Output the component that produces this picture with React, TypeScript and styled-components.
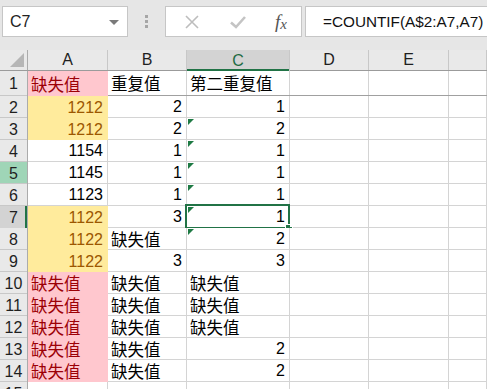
import styled, { createGlobalStyle } from "styled-components";

const GlobalStyle = createGlobalStyle`
  html, body {
    margin: 0;
    padding: 0;
    background: #ffffff;
    overflow: hidden;
  }
  body {
    font-family: "Liberation Sans", "Noto Sans CJK SC", Arial, sans-serif;
  }
`;

const COLS = "28px 80px 79px 103px 79px 80px 1fr";

type Kind = "bad" | "neutral" | "plain";
type Cell = { t: string; num?: boolean; kind?: Kind; tri?: boolean; sel?: boolean };

const n = (t: string, extra: Partial<Cell> = {}): Cell => ({ t, num: true, ...extra });
const s = (t: string, extra: Partial<Cell> = {}): Cell => ({ t, ...extra });
const MISS = "缺失值";

const rows: Cell[][] = [
  [s(MISS, { kind: "bad" }), s("重复值"), s("第二重复值")],
  [n("1212", { kind: "neutral" }), n("2"), n("1")],
  [n("1212", { kind: "neutral" }), n("2"), n("2", { tri: true })],
  [n("1154"), n("1"), n("1", { tri: true })],
  [n("1145"), n("1"), n("1", { tri: true })],
  [n("1123"), n("1"), n("1", { tri: true })],
  [n("1122", { kind: "neutral" }), n("3"), n("1", { tri: true, sel: true })],
  [n("1122", { kind: "neutral" }), s(MISS), n("2", { tri: true })],
  [n("1122", { kind: "neutral" }), n("3"), n("3")],
  [s(MISS, { kind: "bad" }), s(MISS), s(MISS)],
  [s(MISS, { kind: "bad" }), s(MISS), s(MISS)],
  [s(MISS, { kind: "bad" }), s(MISS), s(MISS)],
  [s(MISS, { kind: "bad" }), s(MISS), n("2")],
  [s(MISS, { kind: "bad" }), s(MISS), n("2")],
  [],
];

function App() {
  return (
    <>
      <GlobalStyle />
      <Window>
        <FormulaBar>
          <NameBox>
            <span>C7</span>
            <Caret />
          </NameBox>
          <Grip>
            <i />
            <i />
            <i />
          </Grip>
          <ButtonBox>
            <svg width="18" height="18" viewBox="0 0 18 18">
              <path d="M3 3 L15 15 M15 3 L3 15" stroke="#bdbdbd" strokeWidth="1.6" fill="none" />
            </svg>
            <svg width="18" height="18" viewBox="0 0 18 18">
              <path d="M2 9.5 L7 14 L16 4" stroke="#c4c4c4" strokeWidth="2.6" fill="none" />
            </svg>
            <Fx>
              f<sub>x</sub>
            </Fx>
          </ButtonBox>
          <FormulaInput>=COUNTIF(A$2:A7,A7)</FormulaInput>
        </FormulaBar>

        <Sheet>
          <HeaderRow>
            <Corner>
              <svg width="14" height="14" viewBox="0 0 14 14">
                <polygon points="14,0 14,14 0,14" fill="#b6b6b6" />
              </svg>
            </Corner>
            {["A", "B", "C", "D", "E", ""].map((c, i) => (
              <ColHead key={i} $active={c === "C"}>
                {c}
              </ColHead>
            ))}
          </HeaderRow>

          {rows.map((r, i) => {
            const rowNo = i + 1;
            return (
              <Row key={i} $h={i === 0 ? 25 : 22} $frozen={i === 0}>
                <RowHead $state={rowNo === 7 ? "sel" : rowNo === 5 ? "hi" : "none"}>{rowNo}</RowHead>
                {[0, 1, 2, 3, 4, 5].map((ci) => {
                  const c = r[ci];
                  return (
                    <DataCell key={ci} $num={!!c?.num} $kind={c?.kind ?? "plain"}>
                      {c?.tri && <Triangle />}
                      {c?.t}
                      {c?.sel && (
                        <Selection>
                          <FillHandle />
                        </Selection>
                      )}
                    </DataCell>
                  );
                })}
              </Row>
            );
          })}
        </Sheet>
      </Window>
    </>
  );
}

export default App;

const Window = styled.div`
  width: 487px;
  height: 389px;
  overflow: hidden;
  background: #ffffff;
`;

const FormulaBar = styled.div`
  height: 50px;
  background: #e6e6e6;
  display: flex;
  align-items: flex-start;
  padding: 6px 0 0 2px;
  box-sizing: border-box;
`;

const Box = styled.div`
  height: 31px;
  box-sizing: border-box;
  background: #ffffff;
  border: 1px solid #c6c6c6;
  display: flex;
  align-items: center;
`;

const NameBox = styled(Box)`
  width: 126px;
  padding: 0 8px 0 7px;
  justify-content: space-between;
  font-size: 16px;
  color: #222;
`;

const Caret = styled.div`
  width: 0;
  height: 0;
  border-left: 5px solid transparent;
  border-right: 5px solid transparent;
  border-top: 5px solid #7a7a7a;
  margin-top: 2px;
`;

const Grip = styled.div`
  width: 37px;
  height: 31px;
  display: flex;
  flex-direction: column;
  align-items: center;
  justify-content: center;
  gap: 2px;
  i {
    width: 3px;
    height: 3px;
    background: #a6a6a6;
    display: block;
  }
`;

const ButtonBox = styled(Box)`
  width: 137px;
  padding: 0 14px 0 17px;
  justify-content: space-between;
`;

const Fx = styled.span`
  font-family: "Liberation Serif", "DejaVu Serif", serif;
  font-style: italic;
  font-size: 19px;
  color: #555;
  sub {
    font-size: 15px;
    vertical-align: baseline;
    position: relative;
    top: 1px;
  }
`;

const FormulaInput = styled(Box)`
  flex: 1;
  margin-left: 3px;
  padding-left: 17px;
  border-right: none;
  font-size: 15.3px;
  color: #111;
  white-space: nowrap;
`;

const Sheet = styled.div`
  display: flex;
  flex-direction: column;
`;

const HeaderRow = styled.div`
  display: grid;
  grid-template-columns: ${COLS};
  grid-template-rows: minmax(0, 1fr);
  height: 21px;
  background: #e9e9e9;
  border-bottom: 1px solid #9b9b9b;
  box-sizing: border-box;
`;

const Corner = styled.div`
  display: flex;
  align-items: flex-end;
  justify-content: flex-end;
  padding: 0 3px 3px 0;
  border-right: 1px solid #ababab;
  box-sizing: border-box;
`;

const ColHead = styled.div<{ $active: boolean }>`
  display: flex;
  align-items: center;
  justify-content: center;
  font-size: 16px;
  line-height: 1;
  color: ${(p) => (p.$active ? "#1e6b43" : "#1f1f1f")};
  background: ${(p) => (p.$active ? "#d3d3d3" : "transparent")};
  border-right: 1px solid #c8c8c8;
  box-shadow: ${(p) => (p.$active ? "inset 0 -2px 0 #217346" : "none")};
  box-sizing: border-box;
  margin-bottom: ${(p) => (p.$active ? "-1px" : "0")};
`;

const Row = styled.div<{ $h: number; $frozen: boolean }>`
  display: grid;
  grid-template-columns: ${COLS};
  grid-template-rows: minmax(0, 1fr);
  height: ${(p) => p.$h}px;
  flex-shrink: 0;
  border-bottom: 1px solid ${(p) => (p.$frozen ? "#a0a0a0" : "#d4d4d4")};
  box-sizing: border-box;
`;

const RowHead = styled.div<{ $state: "sel" | "hi" | "none" }>`
  display: flex;
  align-items: center;
  justify-content: center;
  padding-top: 1px;
  font-size: 16px;
  line-height: 1;
  color: #1f1f1f;
  background: ${(p) => (p.$state === "sel" ? "#d3d3d3" : p.$state === "hi" ? "#9fd5b7" : "#e9e9e9")};
  border-right: 1px solid #ababab;
  box-shadow: ${(p) => (p.$state === "sel" ? "inset -2px 0 0 #217346" : "inset 0 -1px 0 #c8c8c8")};
  margin-bottom: -1px;
  box-sizing: border-box;
`;

const kindBg: Record<Kind, string> = { bad: "#ffc7ce", neutral: "#ffeb9c", plain: "#ffffff" };
const kindFg: Record<Kind, string> = { bad: "#9c0006", neutral: "#9c5700", plain: "#000000" };

const DataCell = styled.div<{ $num: boolean; $kind: Kind }>`
  position: relative;
  display: flex;
  align-items: center;
  justify-content: ${(p) => (p.$num ? "flex-end" : "flex-start")};
  padding: 1px 4px 0 3px;
  line-height: 1;
  font-family: ${(p) =>
    p.$num ? `"Liberation Sans", Arial, sans-serif` : `"Noto Sans CJK SC", "Liberation Sans", sans-serif`};
  font-size: ${(p) => (p.$num ? "16px" : "16.5px")};
  color: ${(p) => kindFg[p.$kind]};
  background: ${(p) => kindBg[p.$kind]};
  border-right: 1px solid ${(p) => (p.$kind === "plain" ? "#d4d4d4" : kindBg[p.$kind])};
  margin-bottom: ${(p) => (p.$kind === "plain" ? "0" : "-1px")};
  box-sizing: border-box;
  white-space: nowrap;
`;

const Triangle = styled.span`
  position: absolute;
  left: 1px;
  top: 1px;
  width: 0;
  height: 0;
  border-top: 6px solid #1e7a44;
  border-right: 6px solid transparent;
`;

const Selection = styled.div`
  position: absolute;
  left: -2px;
  top: -2px;
  right: -1px;
  bottom: -2px;
  border: 2px solid #217346;
  pointer-events: none;
`;

const FillHandle = styled.div`
  position: absolute;
  right: -5px;
  bottom: -5px;
  width: 6px;
  height: 6px;
  background: #217346;
  border: 1px solid #ffffff;
`;
